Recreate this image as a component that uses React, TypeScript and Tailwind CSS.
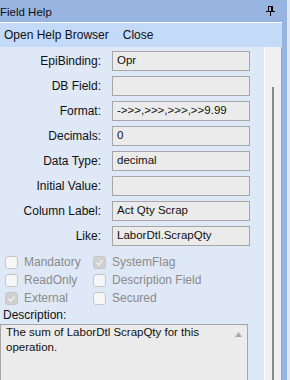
const fields: { label: string; value: string }[] = [
  { label: "EpiBinding:", value: "Opr" },
  { label: "DB Field:", value: "" },
  { label: "Format:", value: "->>>,>>>,>>>,>>9.99" },
  { label: "Decimals:", value: "0" },
  { label: "Data Type:", value: "decimal" },
  { label: "Initial Value:", value: "" },
  { label: "Column Label:", value: "Act Qty Scrap" },
  { label: "Like:", value: "LaborDtl.ScrapQty" },
];

const flags: { label: string; checked: boolean }[][] = [
  [
    { label: "Mandatory", checked: false },
    { label: "SystemFlag", checked: true },
  ],
  [
    { label: "ReadOnly", checked: false },
    { label: "Description Field", checked: false },
  ],
  [
    { label: "External", checked: true },
    { label: "Secured", checked: false },
  ],
];

const PinIcon = () => (
  <svg width="9" height="10" viewBox="0 0 9 10" className="block">
    <rect x="2" y="0" width="5" height="1" fill="#000" />
    <rect x="2" y="1" width="1" height="4" fill="#000" />
    <rect x="5" y="1" width="2" height="4" fill="#000" />
    <rect x="0" y="5" width="9" height="1" fill="#000" />
    <rect x="4" y="6" width="1" height="4" fill="#000" />
  </svg>
);

const CheckBox = ({ checked }: { checked: boolean }) => (
  <div
    className={`w-[13px] h-[13px] rounded-[3px] border border-[#c6c6c6] flex items-center justify-center ${
      checked ? "bg-[#d0d0d0]" : "bg-[#f6f6f6]"
    }`}
  >
    {checked && (
      <svg width="9" height="9" viewBox="0 0 9 9">
        <path d="M1.5 4.8 L3.6 6.8 L7.5 2.2" stroke="#f4f4f4" strokeWidth="1.3" fill="none" />
      </svg>
    )}
  </div>
);

const App = () => {
  return (
    <div className="w-[290px] h-[380px] overflow-hidden flex font-['Liberation_Sans',Arial,sans-serif] text-[#111]">
      <div className="w-[287px] h-full bg-[#97b4e0] flex flex-col">
        {/* Title bar */}
        <div className="h-[22px] flex items-center justify-between pr-[12px]">
          <span className="text-[11.5px] leading-none pt-[3px]">Field Help</span>
          <PinIcon />
        </div>

        <div className="flex-1 flex min-h-0">
          <div className="w-[282px] flex flex-col border-t border-white">
            {/* Menu */}
            <div className="h-[24px] bg-[#c3daf9] flex items-center text-[12px] pl-[4px] gap-[14px]">
              <span>Open Help Browser</span>
              <span>Close</span>
            </div>

            <div className="flex-1 flex min-h-0">
              {/* Content */}
              <div className="w-[264px] bg-[#dee8f6] pt-[4px] overflow-hidden">
                <div className="flex flex-col gap-[5px]">
                  {fields.map((f) => (
                    <div key={f.label} className="flex items-center h-[20px]">
                      <div className="w-[102px] text-right text-[12px] pr-[1px]">{f.label}</div>
                      <div className="ml-[10px] w-[138px] h-[20px] bg-[#ebebeb] border border-[#a5a5a5] flex items-center pl-[4px] text-[11.5px] whitespace-nowrap overflow-hidden">
                        {f.value}
                      </div>
                    </div>
                  ))}
                </div>

                <div className="mt-[7px] flex flex-col">
                  {flags.map((row, i) => (
                    <div key={i} className="h-[18px] flex items-center text-[12px] text-[#8a8a8a]">
                      <div className="w-[93px] pl-[5px] flex items-center gap-[6px]">
                        <CheckBox checked={row[0].checked} />
                        <span>{row[0].label}</span>
                      </div>
                      <div className="flex items-center gap-[6px]">
                        <CheckBox checked={row[1].checked} />
                        <span>{row[1].label}</span>
                      </div>
                    </div>
                  ))}
                </div>

                <div className="h-[16px] flex items-center text-[12px] pl-[3px]">Description:</div>
                <div className="mt-[1px] w-[248px] h-[80px] bg-[#ebebeb] border border-[#a5a5a5] flex">
                  <div className="flex-1 pl-[5px] text-[11.5px] leading-[15px]">
                    The sum of LaborDtl ScrapQty for this operation.
                  </div>
                  <div className="w-[18px] flex justify-center pt-[7px]">
                    <svg width="7" height="5" viewBox="0 0 7 5" className="block">
                      <path d="M0 5 L3.5 0 L7 5 Z" fill="#a8a8a8" />
                    </svg>
                  </div>
                </div>
              </div>

              {/* Scrollbar */}
              <div className="w-[1px] bg-white" />
              <div className="w-[16px] bg-[#f0f0f0] flex justify-center pt-[40px]">
                <div className="w-[2px] h-full bg-[#8a8a8a] ml-[-1px]" />
              </div>
              <div className="w-[1px] bg-[#8fa6c8]" />
            </div>
          </div>
          <div className="flex-1" />
        </div>
      </div>
      <div className="flex-1 h-full bg-[#dfe8f6]" />
    </div>
  );
};

export default App;
